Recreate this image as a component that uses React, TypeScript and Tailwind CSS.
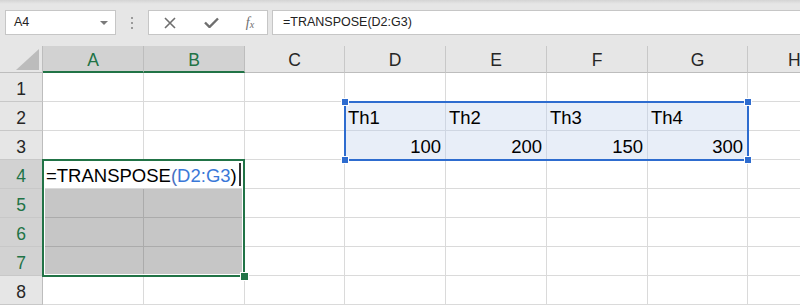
import React from "react";

const cols = [
  { l: "A", w: "w-[101px]", sel: true },
  { l: "B", w: "w-[101px]", sel: true },
  { l: "C", w: "w-[100px]", sel: false },
  { l: "D", w: "w-[101px]", sel: false },
  { l: "E", w: "w-[101px]", sel: false },
  { l: "F", w: "w-[101px]", sel: false },
  { l: "G", w: "w-[100px]", sel: false },
];

type CellKind = "plain" | "gray" | "blue";

function Cell({ w, kind, children, right }: { w: string; kind: CellKind; children?: React.ReactNode; right?: boolean }) {
  const base =
    kind === "gray"
      ? "bg-[#c6c6c6] border-[#ababab]"
      : kind === "blue"
      ? "bg-[#e8eef8] border-[#cfd6e2]"
      : "bg-white border-[#dadada]";
  return (
    <div
      className={`${w} shrink-0 h-full border-r border-b ${base} flex items-start pt-[6px] text-[18.5px] leading-[20px] text-black whitespace-nowrap ${
        right ? "justify-end pr-[4px]" : "pl-[3px]"
      }`}
    >
      {children}
    </div>
  );
}

function RowHead({ n, sel }: { n: number; sel: boolean }) {
  return (
    <div
      className={`w-[43px] shrink-0 h-full border-r border-b border-r-[#bdbdbd] border-b-[#c8c8c8] flex justify-center pt-[6px] text-[17.5px] leading-[20px] ${
        sel ? "bg-[#d2d2d2] text-[#217346]" : "bg-[#e6e6e6] text-[#262626]"
      }`}
    >
      {n}
    </div>
  );
}

export default function App() {
  const data2 = ["Th1", "Th2", "Th3", "Th4"];
  const data3 = ["100", "200", "150", "300"];
  return (
    <div className="w-[800px] h-[305px] overflow-hidden bg-white font-['Liberation_Sans',Arial,sans-serif] relative">
      {/* Toolbar */}
      <div className="h-[46px] bg-[#e6e6e6] relative flex items-start pt-[10px]">
        <div className="absolute left-0 right-0 top-0 h-[4px] bg-gradient-to-b from-[#d4d4d4] to-[#e6e6e6]" />
        <div className="ml-[5px] w-[111px] h-[25px] bg-white border border-[#c6c6c6] flex items-center pl-[8px] pr-[7px] text-[12.5px] text-[#222]">
          <span className="flex-1">A4</span>
          <svg width="8" height="4" viewBox="0 0 8 4">
            <path d="M0 0 L8 0 L4 4 Z" fill="#7a7a7a" />
          </svg>
        </div>
        <div className="w-[32px] h-[25px] flex flex-col items-center justify-center gap-[3px]">
          <span className="w-[2px] h-[2px] bg-[#9a9a9a]" />
          <span className="w-[2px] h-[2px] bg-[#9a9a9a]" />
          <span className="w-[2px] h-[2px] bg-[#9a9a9a]" />
        </div>
        <div className="w-[120px] h-[25px] bg-white border border-[#c6c6c6] flex items-center">
          <div className="w-[40px] flex justify-center pl-[2px]">
            <svg width="14" height="12" viewBox="0 0 14 12">
              <path d="M2 1 L12 11 M12 1 L2 11" stroke="#6e6e6e" strokeWidth="1.6" fill="none" />
            </svg>
          </div>
          <div className="w-[40px] flex justify-center pl-[4px]">
            <svg width="15" height="11" viewBox="0 0 15 11">
              <path d="M1 5.5 L5.5 10 L14 1.5" stroke="#6e6e6e" strokeWidth="2.4" fill="none" />
            </svg>
          </div>
          <div className="w-[38px] flex justify-center pl-[4px] font-['Liberation_Serif',serif] italic text-[#6e6e6e] leading-none">
            <span className="text-[14px]">f</span>
            <span className="text-[10px] mt-[4px]">x</span>
          </div>
        </div>
        <div className="ml-[4px] flex-1 h-[25px] bg-white border border-r-0 border-[#c6c6c6] flex items-center pl-[10px] text-[12.5px] text-[#222]">
          =TRANSPOSE(D2:G3)
        </div>
      </div>

      {/* Grid */}
      <div className="relative">
        {/* Column headers */}
        <div className="flex h-[27px]">
          <div className="w-[43px] shrink-0 h-full bg-[#e6e6e6] border-r border-b border-[#bdbdbd] flex items-end justify-end pr-[3px] pb-[2px]">
            <svg width="23" height="21" viewBox="0 0 23 21">
              <path d="M23 0 L23 21 L0 21 Z" fill="#bcbcbc" />
            </svg>
          </div>
          {cols.map((c) => (
            <div
              key={c.l}
              className={`${c.w} shrink-0 h-full border-r flex justify-center pt-[4px] text-[17.5px] leading-[20px] ${
                c.sel
                  ? "bg-[#d2d2d2] text-[#217346] border-r-[#bdbdbd] border-b-2 border-b-[#217346]"
                  : "bg-[#e6e6e6] text-[#262626] border-r-[#c8c8c8] border-b border-b-[#bdbdbd]"
              }`}
            >
              {c.l}
            </div>
          ))}
          <div className="flex-1 h-full bg-[#e6e6e6] border-b border-[#bdbdbd] flex justify-center pt-[4px] text-[17.5px] leading-[20px] text-[#262626] pl-[40px]">
            H
          </div>
        </div>

        {/* Rows */}
        {[1, 2, 3, 4, 5, 6, 7, 8].map((r) => {
          const selRow = r >= 4 && r <= 7;
          return (
            <div key={r} className="flex h-[29px]">
              <RowHead n={r} sel={selRow} />
              {r === 4 ? (
                <div className="w-[202px] shrink-0 h-full bg-white border-r border-b border-[#dadada] flex items-start pt-[6px] pl-[3px] text-[18.5px] leading-[20px] text-black whitespace-nowrap">
                  <span>=TRANSPOSE</span>
                  <span className="text-[#4a6fc0]">(</span>
                  <span className="text-[#3a78d8]">D2:G3</span>
                  <span>)</span>
                  <span className="ml-[2px] mt-[-3px] w-[2px] h-[23px] bg-[#333]" />
                </div>
              ) : (
                <>
                  <Cell w="w-[101px]" kind={selRow ? "gray" : "plain"} />
                  <Cell w="w-[101px]" kind={selRow ? "gray" : "plain"} />
                </>
              )}
              <Cell w="w-[100px]" kind="plain" />
              {[0, 1, 2, 3].map((i) => {
                const w = i === 3 ? "w-[100px]" : "w-[101px]";
                if (r === 2)
                  return (
                    <Cell key={i} w={w} kind="blue">
                      {data2[i]}
                    </Cell>
                  );
                if (r === 3)
                  return (
                    <Cell key={i} w={w} kind="blue" right>
                      {data3[i]}
                    </Cell>
                  );
                return <Cell key={i} w={w} kind="plain" />;
              })}
              <div className="flex-1 h-full bg-white border-b border-[#dadada]" />
            </div>
          );
        })}

        {/* Blue range outline D2:G3 */}
        <div className="absolute left-[344px] top-[55px] w-[405px] h-[60px] border-2 border-[#2e6ccf] pointer-events-none">
          <div className="absolute -left-[4px] -top-[4px] w-[6px] h-[6px] bg-[#2e6ccf] outline outline-1 outline-white" />
          <div className="absolute -right-[4px] -top-[4px] w-[6px] h-[6px] bg-[#2e6ccf] outline outline-1 outline-white" />
          <div className="absolute -left-[4px] -bottom-[4px] w-[6px] h-[6px] bg-[#2e6ccf] outline outline-1 outline-white" />
          <div className="absolute -right-[4px] -bottom-[4px] w-[6px] h-[6px] bg-[#2e6ccf] outline outline-1 outline-white" />
        </div>

        {/* Green selection A4:B7 */}
        <div className="absolute left-[42px] top-[113px] w-[203px] h-[118px] border-2 border-[#217346] shadow-[inset_0_0_0_1px_white] pointer-events-none">
          <div className="absolute -right-[5px] -bottom-[5px] w-[7px] h-[7px] bg-[#217346] outline outline-1 outline-white" />
        </div>
      </div>
    </div>
  );
}
